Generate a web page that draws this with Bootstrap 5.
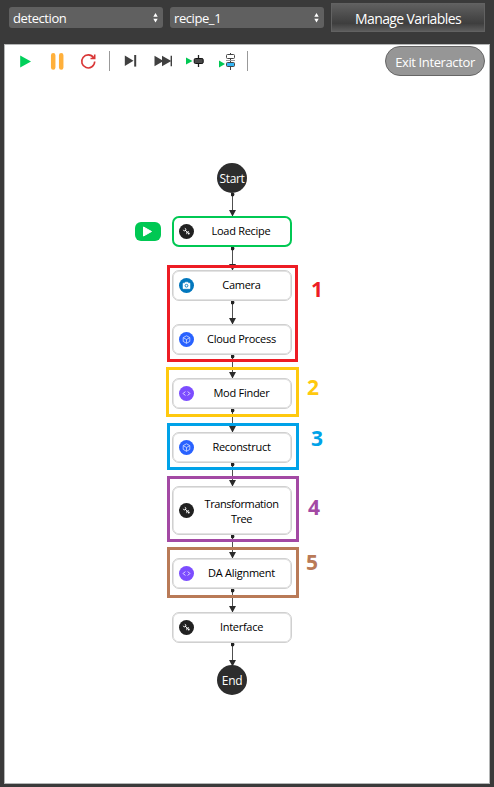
<!DOCTYPE html>
<html lang="en">
<head>
<meta charset="utf-8">
<meta name="viewport" content="width=device-width, initial-scale=1">
<title>Recipe flow</title>
<link href="https://cdn.jsdelivr.net/npm/bootstrap@5.3.0/dist/css/bootstrap.min.css" rel="stylesheet">
<style>
body{background:#3a3a3a;font-family:"Open Sans","Noto Sans",sans-serif;height:787px;overflow:hidden}
.topbar{height:44px;padding:3px 9px 0}
.picker{height:21px;margin-top:4px;background:#606060;border-radius:3px;color:#fff;font-size:13px;line-height:20px;padding:0 5px 0 4px;border:0;letter-spacing:-.42px}
.pick-a{width:154px}
.pick-b{width:154px;margin-left:7px}
.manage{width:154px;height:29px;margin-left:7px;border:1px solid #626262;border-radius:0;background:linear-gradient(#606060,#484848 50%,#3e3e3e 72%,#5c5c5c);color:#fff;font-size:14px;line-height:29px;padding:0;letter-spacing:-.6px}
.panel{width:486px;height:740px;margin-left:4px;background:#fff;border:1px solid #b4b6b6}
.tools{height:35px;padding-left:12px}
.tool{width:17px;height:17px;margin-top:8px}
.gap-10{margin-left:10px}.gap-12{margin-left:12px}.gap-13{margin-left:13px}.gap-14{margin-left:14px}.gap-15{margin-left:15px}
.wide{width:20px}.mid{width:18px}
.rule{width:1px;height:20px;margin-top:6px;background:#999}
.leave{width:100px;height:30px;margin:1px 4px 0 auto;border:1px solid #666;border-radius:15px;background:#969696;color:#fff;font-size:13px;line-height:30px;padding:0;letter-spacing:-.38px}
.flow{height:702px}
.wires{left:0;top:0}
.node{left:167px;width:120px;height:31px;border:1px solid #d0d0d0;box-shadow:inset 0 0 0 .7px #dadada;border-radius:7px;background:#fff;color:#000;font-size:11px;line-height:15px;padding-left:6px;letter-spacing:-.27px}
.node svg{width:15px;height:15px;flex:none}
.node span{flex:1;text-align:center;padding:0 3px 2px 0;margin-left:1px}
.y-trans span{padding-bottom:0}
.node.active{border:2px solid #00c853;box-shadow:none;padding-left:5px}
.cap{left:212px;width:30px;height:30px;border-radius:50%;background:#2d2d2d;color:#fff;font-size:12px;letter-spacing:-.35px;padding-top:1px}
.group-frame{left:162px;width:132px;border:3px solid}
.group-num{font-size:21px;font-weight:700;line-height:20px;margin-top:-1px}
.run-tag{left:130px;top:142px;width:26px;height:19px;border-radius:6px;background:#00c853}
.c1{color:#ed1c24}.c2{color:#ffc90e}.c3{color:#00a2e8}.c4{color:#a349a4}.c5{color:#b97a57}
.y-start{top:83px}.y-load{top:136px}.y-camera{top:190px}.y-cloud{top:244px}.y-mod{top:298px}.y-rec{top:352px}.y-trans{top:406px;height:49px;letter-spacing:-.42px}.y-da{top:478px}.y-int{top:532px}.y-end{top:585px}
.f1{top:185px;height:97px;width:131px}.f2{top:287px;height:50px;left:161px;width:133px}.f3{top:343px;height:47px}.f4{top:396px;height:66px}.f5{top:467px;height:51px}
.n1{left:306px;top:200px}.n2{left:302px;top:298px}.n3{left:306px;top:349px}.n4{left:303px;top:418px}.n5{left:301px;top:473px}
</style>
</head>
<body>
<svg width="0" height="0" class="position-absolute" aria-hidden="true">
  <symbol id="i-tool" viewBox="0 0 15 15"><circle cx="7.500" cy="7.500" r="7.500" fill="#212121"/><path d="M6 6l3.600 3.400" stroke="#fff" stroke-width="1"/><path d="M5.800 4.300a1.300 1.300 0 1 1-1.500 1.500" fill="none" stroke="#fff" stroke-width="1"/><path d="M7.600 8v2.200M8.500 7.600l1.500-.1" stroke="#ddd" stroke-width=".8"/><circle cx="9.700" cy="9.500" r="1" fill="#fff"/></symbol>
  <symbol id="i-cam" viewBox="0 0 15 15"><circle cx="7.500" cy="7.500" r="7.500" fill="#0277bd"/><path d="M4 5.200h1.600l.7-1h2.500l.7 1H11v5.500H4z" fill="#fff" stroke="#fff" stroke-width=".5" stroke-linejoin="round"/><circle cx="7.500" cy="7.700" r="1.400" fill="none" stroke="#0277bd" stroke-width=".9"/></symbol>
  <symbol id="i-cube" viewBox="0 0 15 15"><circle cx="7.500" cy="7.500" r="7.500" fill="#2962ff"/><path d="M7.500 3.800l3.300 1.800v3.800L7.500 11.300 4.200 9.400V5.600zM4.200 5.600l3.300 1.900 3.300-1.900M7.500 7.500v3.800" fill="none" stroke="#d5e0ff" stroke-width=".8"/></symbol>
  <symbol id="i-code" viewBox="0 0 15 15"><circle cx="7.500" cy="7.500" r="7.500" fill="#7c4dff"/><path d="M6.200 5.500L4.200 7.500l2 2M8.800 5.500l2 2-2 2" fill="none" stroke="#eee8ff" stroke-width="1"/></symbol>
  <symbol id="i-sort" viewBox="0 0 5 10"><path d="M2.500 0L4.700 3.800H.3zM2.500 9.600L.3 5.800h4.400z" fill="#fff"/></symbol>
</svg>

<header class="topbar d-flex align-items-start">
  <button class="picker pick-a d-flex align-items-center justify-content-between"><span>detection</span><svg width="5" height="10"><use href="#i-sort"/></svg></button>
  <button class="picker pick-b d-flex align-items-center justify-content-between"><span>recipe_1</span><svg width="5" height="10"><use href="#i-sort"/></svg></button>
  <button class="btn manage">Manage Variables</button>
</header>

<main class="panel">
  <div class="tools">
    <div class="d-flex align-items-start">
      <svg class="tool" viewBox="0 0 17 17"><path d="M3.200 2.500L14 8.500 3.200 14.500z" fill="#00d05a"/></svg>
      <svg class="tool gap-15" viewBox="0 0 17 17"><path d="M4.200 2.300v12.200M12.200 2.300v12.200" stroke="#ffb03b" stroke-width="4.500" stroke-linecap="round"/></svg>
      <svg class="tool gap-14" viewBox="0 0 17 17"><path d="M13.600 4.800A6.500 6.500 0 1 0 14.700 8.500M14.700 1.500v4h-4.200" fill="none" stroke="#d93636" stroke-width="1.600"/></svg>
      <i class="rule gap-12"></i>
      <svg class="tool gap-13" viewBox="0 0 17 17"><path d="M1.800 2.500L10.500 7.800 1.800 13z" fill="#404040"/><path d="M12.200 2v11.600" stroke="#404040" stroke-width="2"/></svg>
      <svg class="tool wide gap-14" viewBox="0 0 20 17"><path d="M.5 2.800l9 5.200-9 5.200zM8 2.800l9.300 5.200L8 13.200z" fill="#404040"/><path d="M17.300 2.800v10.400" stroke="#404040" stroke-width="1.400"/></svg>
      <svg class="tool wide gap-12" viewBox="0 0 20 17"><path d="M0 4.500L6.500 8 0 11.500z" fill="#00c853"/><path d="M12.500 2v12" stroke="#222" stroke-width="1.300"/><rect x="8.200" y="5.500" width="9" height="5" rx="1.300" fill="#484848" stroke="#111"/></svg>
      <svg class="tool mid gap-13" viewBox="0 0 18 17"><path d="M0 7.500L6 11 0 14.500z" fill="#00c853"/><path d="M11.500 0v17" stroke="#444"/><rect x="7.500" y="1.500" width="8" height="4" rx="1" fill="#fff" stroke="#444"/><path d="M7 7.500h9" stroke="#999"/><rect x="7.500" y="9.500" width="8" height="4" rx="1" fill="#35b6f5" stroke="#444"/></svg>
      <i class="rule gap-10"></i>
      <button class="btn leave">Exit Interactor</button>
    </div>
  </div>

  <section class="flow position-relative">
    <svg class="wires position-absolute" width="484" height="702" viewBox="5 80 484 702">
      <defs>
        <marker id="dot" markerUnits="userSpaceOnUse" markerWidth="4" markerHeight="4" refX="2" refY="2"><circle cx="2" cy="2" r="1.900" fill="#222"/></marker>
        <marker id="tip" markerUnits="userSpaceOnUse" markerWidth="7" markerHeight="8" refX="6" refY="3.500" orient="auto"><path d="M0 0L6.500 3.500 0 7z" fill="#2b2b2b"/></marker>
      </defs>
      <g stroke="#505050" stroke-width="1">
        <path marker-start="url(#dot)" marker-end="url(#tip)" d="M232.500 194.500V216"/>
        <path marker-start="url(#dot)" marker-end="url(#tip)" d="M232.500 248.500V270"/>
        <path marker-start="url(#dot)" marker-end="url(#tip)" d="M232.500 302.500V324"/>
        <path marker-start="url(#dot)" marker-end="url(#tip)" d="M232.500 356.500V378"/>
        <path marker-start="url(#dot)" marker-end="url(#tip)" d="M232.500 410.500V432"/>
        <path marker-start="url(#dot)" marker-end="url(#tip)" d="M232.500 464.500V486"/>
        <path marker-start="url(#dot)" marker-end="url(#tip)" d="M232.500 536.500V558"/>
        <path marker-start="url(#dot)" marker-end="url(#tip)" d="M232.500 590.500V612"/>
        <path marker-start="url(#dot)" marker-end="url(#tip)" d="M232.500 644.500V666"/>
      </g>
    </svg>

    <div class="cap y-start position-absolute d-flex align-items-center justify-content-center">Start</div>
    <div class="run-tag position-absolute d-flex"><svg width="26" height="19"><path d="M8.500 5L16.500 9.500l-8 4.500z" fill="#fff" stroke="#fff" stroke-linejoin="round"/></svg></div>
    <div class="node active y-load position-absolute d-flex align-items-center"><svg><use href="#i-tool"/></svg><span>Load Recipe</span></div>
    <div class="node y-camera position-absolute d-flex align-items-center"><svg><use href="#i-cam"/></svg><span>Camera</span></div>
    <div class="node y-cloud position-absolute d-flex align-items-center"><svg><use href="#i-cube"/></svg><span>Cloud Process</span></div>
    <div class="node y-mod position-absolute d-flex align-items-center"><svg><use href="#i-code"/></svg><span>Mod Finder</span></div>
    <div class="node y-rec position-absolute d-flex align-items-center"><svg><use href="#i-cube"/></svg><span>Reconstruct</span></div>
    <div class="node y-trans position-absolute d-flex align-items-center"><svg><use href="#i-tool"/></svg><span>Transformation<br>Tree</span></div>
    <div class="node y-da position-absolute d-flex align-items-center"><svg><use href="#i-code"/></svg><span>DA Alignment</span></div>
    <div class="node y-int position-absolute d-flex align-items-center"><svg><use href="#i-tool"/></svg><span>Interface</span></div>
    <div class="cap y-end position-absolute d-flex align-items-center justify-content-center">End</div>

    <div class="group-frame f1 c1 position-absolute"></div>
    <div class="group-frame f2 c2 position-absolute"></div>
    <div class="group-frame f3 c3 position-absolute"></div>
    <div class="group-frame f4 c4 position-absolute"></div>
    <div class="group-frame f5 c5 position-absolute"></div>
    <div class="group-num n1 c1 position-absolute">1</div>
    <div class="group-num n2 c2 position-absolute">2</div>
    <div class="group-num n3 c3 position-absolute">3</div>
    <div class="group-num n4 c4 position-absolute">4</div>
    <div class="group-num n5 c5 position-absolute">5</div>
  </section>
</main>
<script src="https://cdn.jsdelivr.net/npm/bootstrap@5.3.0/dist/js/bootstrap.bundle.min.js"></script>
</body>
</html>
